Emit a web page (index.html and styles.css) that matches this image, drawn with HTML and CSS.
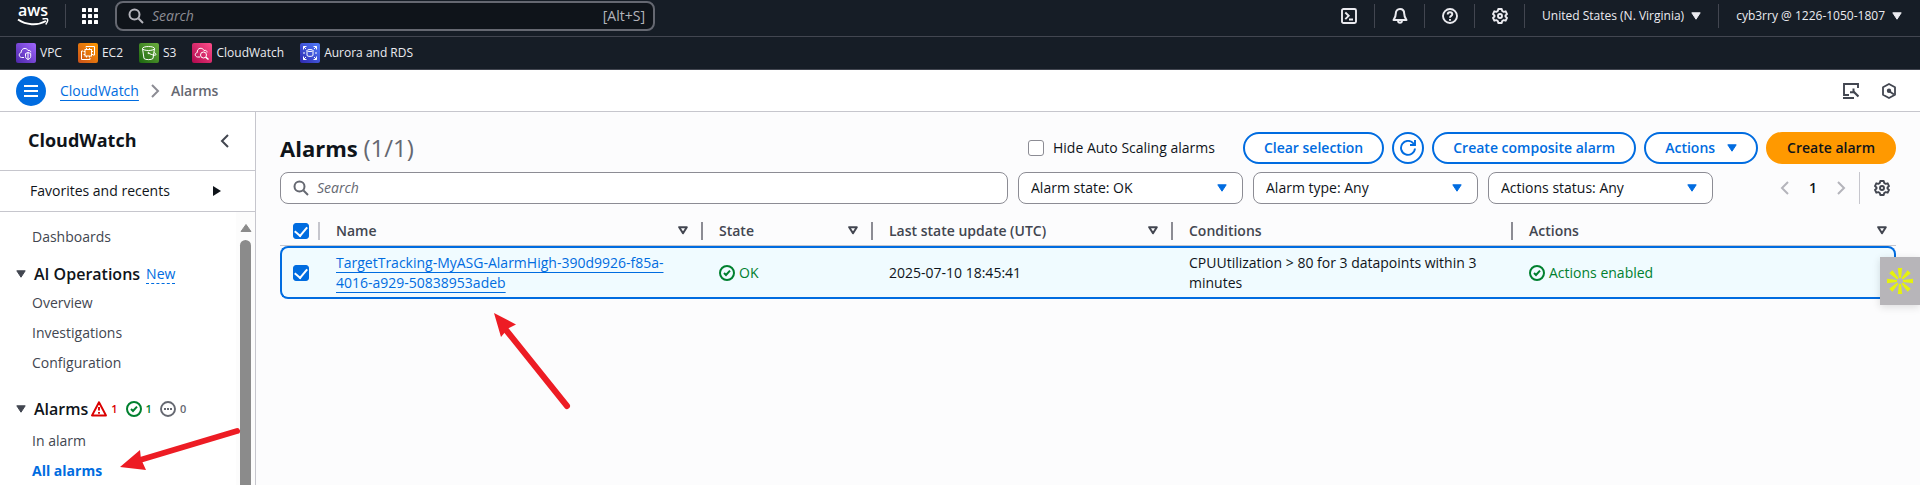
FILE: index.html
```html
<!DOCTYPE html>
<html lang="en">
<head>
<meta charset="utf-8">
<title>Alarms | CloudWatch</title>
<link rel="stylesheet" href="styles.css">
</head>
<body>
<svg class="defs" aria-hidden="true">
  <defs>
    <symbol id="search" viewBox="0 0 16 16"><circle cx="6.5" cy="6.5" r="5" fill="none" stroke="currentColor" stroke-width="2"/><path d="M10.5 10.5 15 15" stroke="currentColor" stroke-width="2"/></symbol>
    <symbol id="down" viewBox="0 0 10 8"><path d="M.8.8h8.4L5 7.2z" fill="currentColor" stroke="currentColor" stroke-width="1" stroke-linejoin="round"/></symbol>
    <symbol id="sort" viewBox="0 0 10 9"><path d="M1.2 1.2h7.6L5 7.2z" fill="none" stroke="currentColor" stroke-width="2" stroke-linejoin="round"/></symbol>
    <symbol id="left" viewBox="0 0 16 16"><path d="M11 2 5 8l6 6" fill="none" stroke="currentColor" stroke-width="2"/></symbol>
    <symbol id="right" viewBox="0 0 16 16"><path d="m5 2 6 6-6 6" fill="none" stroke="currentColor" stroke-width="2"/></symbol>
    <symbol id="ok" viewBox="0 0 16 16"><g fill="none" stroke="currentColor" stroke-width="2"><circle cx="8" cy="8" r="7"/><path d="m5 8 2 2 4-4.400"/></g></symbol>
    <symbol id="gear" viewBox="0 0 16 16"><g fill="none" stroke="currentColor" stroke-width="1.900" stroke-linejoin="round"><path d="M6.300 1h3.400l.5 2 1.500.9 2-.6 1.300 2.800L13.500 7.500v1L15 9.900l-1.300 2.800-2-.6-1.500.9-.5 2H6.300l-.5-2-1.500-.9-2 .6L1 9.900l1.500-1.400v-1L1 6.100l1.300-2.800 2 .6L5.800 3z"/><circle cx="8" cy="8" r="2"/></g></symbol>
  </defs>
</svg>

<header class="topbar">
  <a class="aws" href="#" aria-label="AWS home"><span>aws</span><svg viewBox="0 0 32 9" aria-hidden="true"><path d="M1 1.500c8 5.500 19 6.500 28 1.500" fill="none" stroke="#fff" stroke-width="2"/><path d="M25.500 1.200c2-1 4.500-.8 5 0 .4 1-.4 3.600-1.800 5.200" fill="none" stroke="#fff" stroke-width="1.500"/></svg></a>
  <span class="bar-rule"></span>
  <button class="icon-btn apps" aria-label="All services"><svg viewBox="0 0 16 16" fill="#fff"><rect width="4" height="4" rx=".6"/><rect x="6" width="4" height="4" rx=".6"/><rect x="12" width="4" height="4" rx=".6"/><rect y="6" width="4" height="4" rx=".6"/><rect x="6" y="6" width="4" height="4" rx=".6"/><rect x="12" y="6" width="4" height="4" rx=".6"/><rect y="12" width="4" height="4" rx=".6"/><rect x="6" y="12" width="4" height="4" rx=".6"/><rect x="12" y="12" width="4" height="4" rx=".6"/></svg></button>
  <label class="global-search"><svg class="i16"><use href="#search"/></svg><input type="text" placeholder="Search" aria-label="Search services"><span>[Alt+S]</span></label>
  <div class="tools">
    <button class="icon-btn" aria-label="CloudShell"><svg viewBox="0 0 16 16" fill="none" stroke="currentColor" stroke-width="1.900"><rect x="1" y="1" width="14" height="14" rx="1.500"/><path d="m4.300 4.500 3.400 3.300-3.400 3.400M8 11.500h4"/></svg></button>
    <button class="icon-btn" aria-label="Notifications"><svg viewBox="0 0 16 16" fill="none" stroke="currentColor" stroke-width="2" stroke-linejoin="round"><path d="M8 1C5.200 1 3.800 3 3.800 5.500c0 3-.8 4-2.300 6.500h13c-1.500-2.500-2.300-3.500-2.300-6.500C12.200 3 10.800 1 8 1z"/><path d="M6 12.500c.2 3 3.800 3 4 0" /></svg></button>
    <button class="icon-btn" aria-label="Help"><svg viewBox="0 0 16 16" fill="none" stroke="currentColor" stroke-width="1.900"><circle cx="8" cy="8" r="7"/><path d="M5.700 6.500c0-3 4.600-2.800 4.600-.2C10.300 8 8 7.800 8 9.800"/><path d="M8 10.900v1.800"/></svg></button>
    <button class="icon-btn" aria-label="Settings"><svg><use href="#gear"/></svg></button>
    <button class="menu-btn">United States (N. Virginia)<svg class="caret"><use href="#down"/></svg></button>
    <button class="menu-btn">cyb3rry @ 1226-1050-1807<svg class="caret"><use href="#down"/></svg></button>
  </div>
</header>

<nav class="favorites" aria-label="Favorites">
  <a href="#"><svg class="vpc" viewBox="0 0 20 20" fill="none" stroke="#fff" stroke-width="1"><path d="M8 14.500H5.500C2.500 14 2.600 10 5.200 9.600 5 5 10.500 4 12 7.500c1.800-.6 2.700.4 2.800 1.800"/><path d="M9.500 10.500 12 9.500l2.700 1v3c0 1.500-1.500 2.500-2.700 3-1.200-.5-2.500-1.500-2.500-3zM12 9.500v7"/></svg>VPC</a>
  <a href="#"><svg class="ec2" viewBox="0 0 20 20" fill="none" stroke="#fff" stroke-width="1"><path d="M8 4.500V3.500h8.500V12H15M5 8H3.500v8.500H12V15"/><rect x="7" y="6.500" width="6.500" height="6.500"/><path d="M8.500 6.500V5m3 1.500V5m-3 8v1.500m3-1.500v1.500M7 8.500H5.500m1.500 3H5.500m8-3H15m-1.500 3H15"/></svg>EC2</a>
  <a href="#"><svg class="s3" viewBox="0 0 20 20" fill="none" stroke="#fff" stroke-width="1"><ellipse cx="9.500" cy="5.500" rx="6" ry="2"/><path d="M3.500 5.500 5 15.500c1.500 1.500 7.500 1.500 9 0l1.500-10M9.500 10c3 2 7.500 3 7.500 1.500 0-.8-1-1.500-2-2"/><circle cx="9.500" cy="10" r=".6"/></svg>S3</a>
  <a href="#"><svg class="cw" viewBox="0 0 20 20" fill="none" stroke="#fff" stroke-width="1"><path d="M8 14H5.500C2.500 13.500 2.600 10 5.200 9.600 5 4.500 10.500 4 12 7.500c2-.6 3 .3 3 2"/><circle cx="11.500" cy="12" r="3"/><path d="m13.700 14.200 2.800 2.300" stroke-width="1.500"/></svg>CloudWatch</a>
  <a href="#"><svg class="rds" viewBox="0 0 20 20" fill="none" stroke="#fff" stroke-width="1"><path d="M3.500 6.500v-3h3m-3 0L6 6m10.500.5v-3h-3m3 0L14 6M3.500 13.500v3h3m-3 0L6 14m10.500-.5v3h-3m3 0L14 14M3.500 9l1 1-1 1m13-2-1 1 1 1"/><ellipse cx="10" cy="7.500" rx="3" ry="1"/><path d="M7 7.500v5c.7 1.200 5.300 1.200 6 0v-5"/></svg>Aurora and RDS</a>
</nav>

<div class="crumbs">
  <button class="hamburger" aria-label="Toggle navigation"><svg viewBox="0 0 16 16" stroke="#fff" stroke-width="2"><path d="M1 3h14M1 8h14M1 13h14"/></svg></button>
  <nav class="trail" aria-label="Breadcrumb"><a class="link" href="#">CloudWatch</a><svg class="i16"><use href="#right"/></svg><span>Alarms</span></nav>
  <button class="icon-btn" aria-label="Tools"><svg viewBox="0 0 16 16" fill="none" stroke="currentColor" stroke-width="1.900"><path d="M6 12H1V1h14v4M0 15h11"/><path d="m10.500 8.500 5 5" stroke-width="2.200"/><path d="M7 9.300h3.500V5.500" stroke-width="2"/></svg></button>
  <button class="icon-btn" aria-label="Amazon Q"><svg viewBox="0 0 16 16" fill="none" stroke="currentColor" stroke-width="1.800" stroke-linejoin="round"><path d="M8 1 14 4.300v7.400L8 15l-6-3.300V4.300z"/><path d="m8 8 5 3.500"/><circle cx="8" cy="7.700" r="1.300" fill="currentColor"/></svg></button>
</div>

<div class="layout">
  <aside class="sidebar">
    <div class="side-title"><h2>CloudWatch</h2><button class="icon-btn" aria-label="Close navigation"><svg><use href="#left"/></svg></button></div>
    <button class="recents">Favorites and recents<svg viewBox="0 0 8 10"><path d="M0 0v10l8-5z" fill="currentColor"/></svg></button>
    <div class="side-scroll">
      <nav class="side-nav" aria-label="CloudWatch">
        <ul><li><a href="#">Dashboards</a></li></ul>
        <h3><svg class="caret"><use href="#down"/></svg>AI Operations<a class="new" href="#">New</a></h3>
        <ul><li><a href="#">Overview</a></li><li><a href="#">Investigations</a></li><li><a href="#">Configuration</a></li></ul>
        <h3 class="alarm-head"><svg class="caret"><use href="#down"/></svg>Alarms
          <span class="count red"><svg class="i16" viewBox="0 0 16 16" fill="none" stroke="currentColor" stroke-width="1.900" stroke-linejoin="round"><path d="M8 1.200 1 14.500h14zM8 6v3.500M8 11v1.700"/></svg>1</span>
          <span class="count green"><svg class="i16"><use href="#ok"/></svg>1</span>
          <span class="count grey"><svg class="i16" viewBox="0 0 16 16"><circle cx="8" cy="8" r="7" fill="none" stroke="currentColor" stroke-width="1.900"/><path d="M4 7h2v2H4zm3 0h2v2H7zm3 0h2v2h-2z" fill="currentColor"/></svg>0</span>
        </h3>
        <ul><li><a href="#">In alarm</a></li><li><a class="current" href="#">All alarms</a></li></ul>
      </nav>
      <div class="scrollbar"><svg viewBox="0 0 12 9"><path d="M6 1 11 8H1z" fill="currentColor" stroke="currentColor" stroke-linejoin="round"/></svg><span></span></div>
    </div>
  </aside>

  <main class="main">
    <div class="headline">
      <h1>Alarms <span>(1/1)</span></h1>
      <label class="hide"><input type="checkbox">Hide Auto Scaling alarms</label>
      <div class="actions">
        <button class="btn">Clear selection</button>
        <button class="btn round" aria-label="Refresh"><svg viewBox="0 0 16 16" fill="none" stroke="currentColor" stroke-width="1.900"><path d="M15 8.500A7 7 0 1 1 13.500 3.500L15 5"/><path d="M15 0v5h-5"/></svg></button>
        <button class="btn">Create composite alarm</button>
        <button class="btn">Actions<svg class="caret"><use href="#down"/></svg></button>
        <button class="btn primary">Create alarm</button>
      </div>
    </div>
    <div class="filters">
      <label class="field"><svg class="i16"><use href="#search"/></svg><input type="text" placeholder="Search" aria-label="Search alarms"></label>
      <div class="select"><select aria-label="Alarm state"><option>Alarm state: OK</option></select><svg class="caret"><use href="#down"/></svg></div>
      <div class="select"><select aria-label="Alarm type"><option>Alarm type: Any</option></select><svg class="caret"><use href="#down"/></svg></div>
      <div class="select"><select aria-label="Actions status"><option>Actions status: Any</option></select><svg class="caret"><use href="#down"/></svg></div>
      <div class="pager">
        <button class="icon-btn" aria-label="Previous page"><svg><use href="#left"/></svg></button>
        <button class="page">1</button>
        <button class="icon-btn" aria-label="Next page"><svg><use href="#right"/></svg></button>
        <span class="pager-rule"></span>
        <button class="icon-btn prefs" aria-label="Preferences"><svg><use href="#gear"/></svg></button>
      </div>
    </div>
    <table class="alarms">
      <colgroup><col class="c-check"><col class="c-name"><col class="c-state"><col class="c-date"><col class="c-cond"><col></colgroup>
      <thead><tr>
        <th class="pick"><div><input type="checkbox" checked aria-label="Select all alarms"></div></th>
        <th><div>Name<svg class="sort"><use href="#sort"/></svg></div></th>
        <th><div>State<svg class="sort"><use href="#sort"/></svg></div></th>
        <th><div>Last state update (UTC)<svg class="sort"><use href="#sort"/></svg></div></th>
        <th><div>Conditions</div></th>
        <th><div>Actions<svg class="sort"><use href="#sort"/></svg></div></th>
      </tr></thead>
      <tbody><tr>
        <td class="pick"><input type="checkbox" checked aria-label="Select alarm"></td>
        <td><a class="link" href="#">TargetTracking-MyASG-AlarmHigh-390d9926-f85a-<wbr>4016-a929-50838953adeb</a></td>
        <td><span class="status"><svg class="i16"><use href="#ok"/></svg>OK</span></td>
        <td>2025-07-10 18:45:41</td>
        <td>CPUUtilization &gt; 80 for 3 datapoints within 3 minutes</td>
        <td><span class="status"><svg class="i16"><use href="#ok"/></svg>Actions enabled</span></td>
      </tr></tbody>
    </table>
  </main>
</div>

<svg class="mark mark-row" viewBox="0 0 80 100" aria-hidden="true"><path d="M12 17 73 93" stroke="#ed1c24" stroke-width="6" stroke-linecap="round"/><path d="M0 0 22 11.500 14 15.500 7 24z" fill="#ed1c24"/></svg>
<svg class="mark mark-side" viewBox="0 0 124 44" aria-hidden="true"><path d="M20 36 117 7" stroke="#ed1c24" stroke-width="6" stroke-linecap="round"/><path d="M0 43 20 26l1 9 5 11z" fill="#ed1c24"/></svg>
<button class="floater" aria-label="Assistant"><svg viewBox="-14 -14 28 28" fill="#e6f20d"><g id="ray2"><path id="ray" d="M-1-3-2.200-13h4.400L1-3z"/><use href="#ray" transform="rotate(45)"/></g><use href="#ray2" transform="rotate(90)"/><use href="#ray2" transform="rotate(180)"/><use href="#ray2" transform="rotate(270)"/></svg></button>
</body>
</html>
```
FILE: styles.css
```css
* { box-sizing: border-box; }
body {
  margin: 0;
  min-height: 100vh;
  display: flex;
  flex-direction: column;
  position: relative;
  overflow-x: hidden;
  background: #fcfcfd;
  color: #0f141a;
  font: 14px/20px "Open Sans", "Noto Sans", sans-serif;
}
button, input, select { font: inherit; color: inherit; margin: 0; }
button { background: none; border: 0; padding: 0; cursor: pointer; white-space: nowrap; }
a { color: inherit; text-decoration: none; }
h1, h2, h3, ul { margin: 0; padding: 0; }
ul { list-style: none; }
svg { flex: none; display: block; }
.defs { display: none; }
.i16, .icon-btn svg { width: 16px; height: 16px; }
.icon-btn { display: flex; align-items: center; justify-content: center; }
.caret { width: 10px; height: 8px; }
.sort { width: 10px; height: 9px; }

/* Console header */
.topbar {
  display: flex;
  align-items: center;
  height: 37px;
  padding: 0 18px 5px 17px;
  background: #161d26;
  border-bottom: 1px solid #424650;
  color: #ebebf0;
  font-size: 12px;
  font-weight: 500;
}
.aws { width: 32px; color: #fff; font: 600 16px/16px "Open Sans", sans-serif; text-align: center; }
.aws span { display: block; height: 14px; line-height: 12px; }
.aws svg { width: 32px; height: 9px; }
.bar-rule { width: 1px; height: 24px; margin-left: 16px; background: #424650; }
.apps { margin: 0 17px 0 16px; }
.global-search {
  display: flex;
  align-items: center;
  width: 540px;
  height: 30px;
  padding: 0 8px 0 11px;
  gap: 8px;
  background: #0f141a;
  border: 2px solid #656871;
  border-radius: 8px;
  font-size: 14px;
  font-weight: 400;
  color: #b4b4bb;
}
.global-search input, .field input { flex: 1; min-width: 0; padding: 0; border: 0; background: none; outline: 0; }
input::placeholder { color: #8c8c94; font-style: italic; opacity: 1; }
.tools { display: flex; align-items: center; margin-left: auto; }
.tools > * { height: 24px; border-left: 1px solid #424650; }
.tools .icon-btn { width: 50px; }
.tools .icon-btn:first-child { border-left: 0; }
.menu-btn { display: flex; align-items: center; gap: 7px; padding: 0 17px; }
.menu-btn:last-child { padding-right: 0; }

.favorites {
  display: flex;
  align-items: center;
  gap: 16px;
  height: 33px;
  padding: 0 16px;
  background: #161d26;
  border-bottom: 1px solid #424650;
  color: #ebebf0;
  font-size: 12px;
  font-weight: 500;
}
.favorites a { display: flex; align-items: center; gap: 4px; }
.favorites svg { width: 20px; height: 20px; border-radius: 2px; }
.vpc { background: linear-gradient(45deg, #4d27a8, #a166ff); }
.ec2 { background: linear-gradient(45deg, #c8511b, #f90); }
.s3 { background: linear-gradient(45deg, #1b660f, #6cae3e); }
.cw { background: linear-gradient(45deg, #b0084d, #ff4f8b); }
.rds { background: linear-gradient(45deg, #2e27ad, #527fff); }

/* Breadcrumb bar */
.crumbs {
  display: flex;
  align-items: center;
  height: 42px;
  padding: 0 23px 0 16px;
  background: #fff;
  border-bottom: 1px solid #c6c6cd;
  color: #424650;
}
.hamburger { display: grid; place-items: center; width: 30px; height: 30px; border-radius: 50%; background: #006ce0; }
.hamburger svg { width: 16px; height: 16px; }
.trail { display: flex; align-items: center; flex: 1; margin-left: 14px; gap: 8px; color: #656871; font-weight: 600; }
.trail svg { color: #8c8c94; }
.link { color: #006ce0; font-weight: 400; text-decoration: underline 1px; text-underline-offset: 4px; }
.crumbs > .icon-btn { margin-left: 22px; }

.layout { display: flex; flex: 1; }

/* Sidebar */
.sidebar { display: flex; flex-direction: column; flex: none; width: 256px; background: #fff; border-right: 1px solid #c6c6cd; }
.side-title { display: flex; align-items: center; justify-content: space-between; height: 59px; padding: 0 22px 0 28px; border-bottom: 1px solid #c6c6cd; color: #424650; }
.side-title h2 { padding-bottom: 2px; font-size: 18px; line-height: 22px; font-weight: 700; color: #0f141a; }
.recents { display: flex; align-items: center; justify-content: space-between; height: 41px; padding: 0 34px 0 30px; border-bottom: 1px solid #c6c6cd; }
.recents svg { width: 8px; height: 10px; }
.side-scroll { display: flex; flex: 1; }
.side-nav { flex: 1; padding: 15px 0 4px 16px; color: #424650; }
.side-nav ul { display: flex; flex-direction: column; gap: 10px; padding-left: 16px; }
.side-nav li { height: 20px; }
.side-nav h3 { display: flex; align-items: center; margin: 16px 0 8px; font-size: 16px; line-height: 22px; font-weight: 600; color: #0f141a; white-space: nowrap; }
.side-nav h3 > .caret { margin-right: 8px; color: #424650; }
.side-nav .alarm-head { margin: 25px 0 11px; }
.new { margin-left: 6px; color: #006ce0; font-size: 14px; line-height: 18px; font-weight: 400; border-bottom: 1px dashed #006ce0; }
.count { display: flex; align-items: center; gap: 4px; margin-left: 8px; font-size: 11px; }
.count:first-of-type { margin-left: 3px; }
.red { color: #db0000; }
.green { color: #00802f; }
.grey { color: #656871; }
.side-nav .current { color: #006ce0; font-weight: 700; }
.scrollbar { display: flex; flex-direction: column; align-items: center; width: 19px; padding-top: 11px; background: #fcfcfc; color: #8b8b8b; gap: 7px; }
.scrollbar svg { width: 12px; height: 10px; }
.scrollbar span { flex: 1; width: 11px; border-radius: 6px 6px 0 0; background: #8b8b8b; }

/* Alarm list */
.main { flex: 1; min-width: 0; padding: 20px 24px; }
.headline { display: flex; align-items: center; height: 32px; gap: 28px; }
h1 { flex: 1; font-size: 22px; line-height: 30px; font-weight: 700; }
h1 span { font-size: 24px; font-weight: 400; color: #656871; }
.hide { display: flex; align-items: center; gap: 9px; white-space: nowrap; }
input[type="checkbox"] { appearance: none; display: grid; place-items: center; flex: none; width: 16px; height: 16px; border: 1px solid #8c8c94; border-radius: 3px; background: #fff; }
input[type="checkbox"]:checked { border-color: #006ce0; background: #006ce0; }
input[type="checkbox"]:checked::before { content: ""; width: 10px; height: 6px; margin-bottom: 2px; border: solid #fff; border-width: 0 0 2px 2px; transform: rotate(-50deg); }
.actions { display: flex; gap: 8px; }
.btn { display: flex; align-items: center; justify-content: center; gap: 12px; height: 32px; padding: 0 19px; border: 2px solid #006ce0; border-radius: 16px; background: #fff; color: #006ce0; font-weight: 600; }
.round { width: 32px; padding: 0; }
.round svg { width: 16px; height: 16px; }
.primary { border-color: #f90; background: #f90; color: #0f141a; }
.filters { display: flex; gap: 10px; margin-top: 8px; }
.field, .select { height: 32px; border: 1px solid #8c8c94; border-radius: 8px; background: #fff; }
.field { display: flex; align-items: center; flex: 1; gap: 8px; padding: 0 12px; color: #656871; }
.field input::placeholder { color: #656871; }
.select { display: grid; align-items: center; width: 225px; }
.select > * { grid-area: 1 / 1; }
.select select { appearance: none; width: 100%; height: 30px; padding: 0 12px; border: 0; background: none; color: #0f141a; }
.select .caret { justify-self: end; margin-right: 15px; color: #006ce0; pointer-events: none; }
.pager { display: flex; align-items: center; justify-content: flex-end; gap: 12px; width: 173px; padding-right: 6px; color: #b4b4bb; }
.page { width: 16px; color: #0f141a; font-weight: 600; }
.pager-rule { width: 1px; height: 32px; margin-left: -2px; background: #c6c6cd; }
.prefs { margin-left: 2px; color: #424650; }

.alarms { width: 100%; margin-top: 12px; table-layout: fixed; border-collapse: separate; border-spacing: 0; }
.c-check { width: 40px; }
.c-name { width: 383px; }
.c-state { width: 170px; }
.c-date { width: 300px; }
.c-cond { width: 340px; }
th { height: 30px; padding: 0; border-bottom: 1px solid #c6c6cd; color: #424650; font-weight: 600; text-align: left; }
th div { display: flex; align-items: center; justify-content: space-between; height: 18px; padding: 0 13px 0 16px; border-right: 2px solid #8c8c94; }
th:last-child div { padding-right: 9px; border-right: 0; }
th.pick div { padding-left: 13px; border-color: #c6c6cd; }
td { height: 53px; padding: 4px 16px; background: #f0fbff; border: solid #006ce0; border-width: 2px 0; }
td:first-child { border-left-width: 2px; border-radius: 8px 0 0 8px; }
td:last-child { border-right-width: 2px; border-radius: 0 8px 8px 0; }
td.pick { padding: 0 0 0 11px; }
.status { display: flex; align-items: center; gap: 4px; color: #00802f; }

/* Pointer arrows and side tab drawn above the page */
.mark { position: absolute; pointer-events: none; fill: none; overflow: visible; }
.mark-row { left: 494px; top: 313px; width: 80px; height: 100px; }
.mark-side { left: 120px; top: 424px; width: 124px; height: 44px; }
.floater { position: absolute; right: 0; top: 257px; display: grid; place-items: center; width: 40px; height: 48px; background: #b7b5b9; box-shadow: 0 2px 8px #0002; }
.floater svg { width: 28px; height: 28px; }
```
